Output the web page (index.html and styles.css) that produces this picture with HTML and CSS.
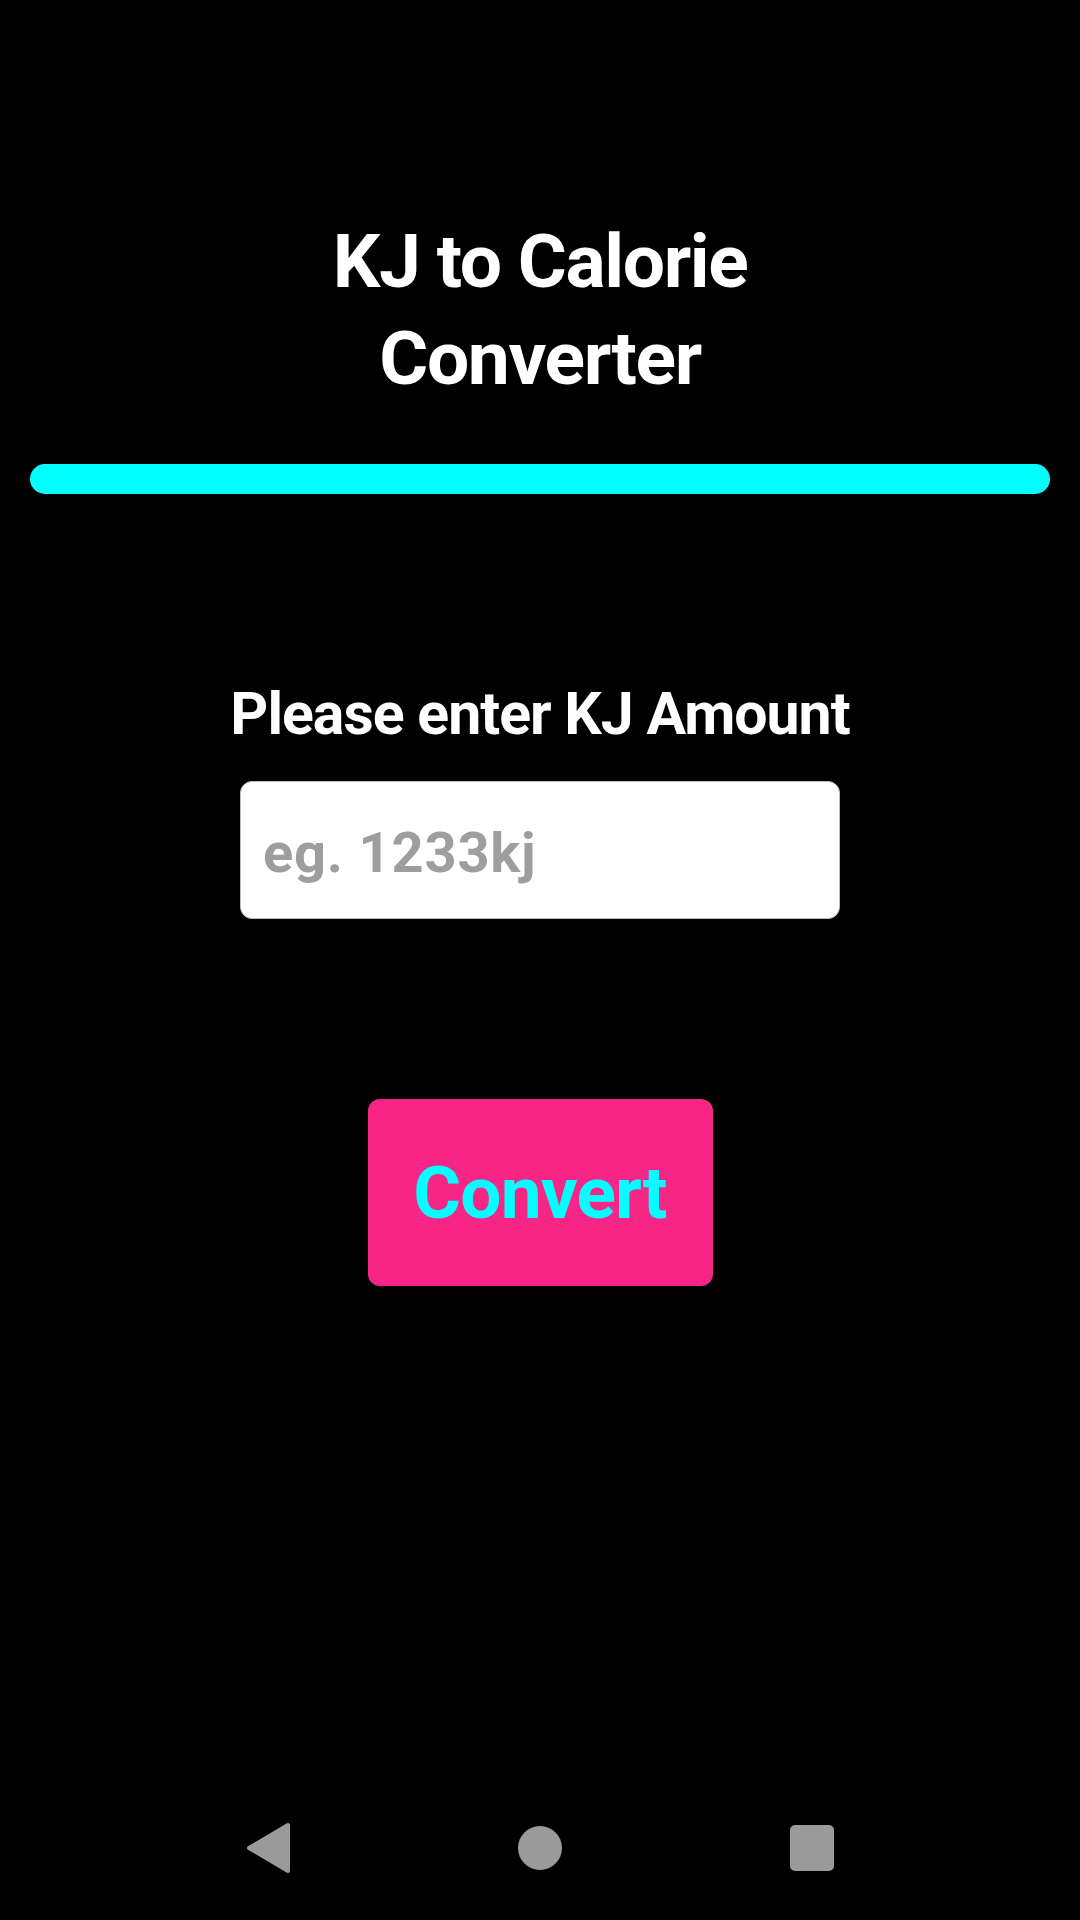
FILE: index.html
```html
<!DOCTYPE html>
<html>
<head>
<meta charset="utf-8">
<link rel="stylesheet" href="styles.css">
</head>
<body>
<div class="app">
  <h1 class="title">KJ to Calorie<br>Converter</h1>
  <div class="bar"></div>
  <label class="label" for="kj">Please enter KJ Amount</label>
  <input id="kj" class="field" type="text" placeholder="eg. 1233kj">
  <button class="convert">Convert</button>
  <nav class="navbar">
    <svg class="nav-icon" width="46" height="52" viewBox="0 0 46 52"><path d="M42 3 L42 49 L3 26 Z" fill="#9a9a9a" stroke="#9a9a9a" stroke-width="4" stroke-linejoin="round"/></svg>
    <span class="nav-circle"></span>
    <span class="nav-square"></span>
  </nav>
</div>
</body>
</html>
```

FILE: styles.css
```css
html, body {
  margin: 0;
  padding: 0;
  background: #000;
}
.app {
  width: 1080px;
  height: 1920px;
  display: flex;
  flex-direction: column;
  align-items: center;
  font-family: Roboto, "Liberation Sans", sans-serif;
  font-weight: 700;
  color: #fff;
}
.title {
  margin: 213px 0 0;
  font-size: 75px;
  line-height: 97px;
  font-weight: 700;
  letter-spacing: -1.4px;
  text-align: center;
}
.bar {
  width: 1020px;
  height: 30px;
  margin-top: 57px;
  background: #00ffff;
  border-radius: 15px;
}
.label {
  margin-top: 185px;
  font-size: 59px;
  line-height: 70px;
  letter-spacing: -1px;
}
.field {
  box-sizing: border-box;
  width: 600px;
  height: 138px;
  margin-top: 32px;
  padding: 6px 22px 0;
  border: 1px solid #bdbdbd;
  border-radius: 12px;
  background: #fff;
  font-family: Roboto, "Liberation Sans", sans-serif;
  font-weight: 700;
  font-size: 56px;
  letter-spacing: 0.8px;
  color: #222;
  outline: none;
}
.field::placeholder {
  color: #9e9e9e;
}
.convert {
  width: 345px;
  height: 187px;
  margin-top: 180px;
  border: none;
  border-radius: 12px;
  background: #f72585;
  color: #00ffff;
  font-family: Roboto, "Liberation Sans", sans-serif;
  font-weight: 700;
  font-size: 73px;
  letter-spacing: -0.8px;
  padding: 0;
}
.navbar {
  margin-top: auto;
  height: 144px;
  width: 100%;
  display: flex;
  align-items: center;
  justify-content: center;
  gap: 228px;
}
.nav-icon {
  display: block;
  margin-right: -2px;
}
.nav-circle {
  width: 44px;
  height: 44px;
  border-radius: 50%;
  background: #9a9a9a;
}
.nav-square {
  width: 44px;
  height: 46px;
  border-radius: 5px;
  background: #9a9a9a;
}
```
